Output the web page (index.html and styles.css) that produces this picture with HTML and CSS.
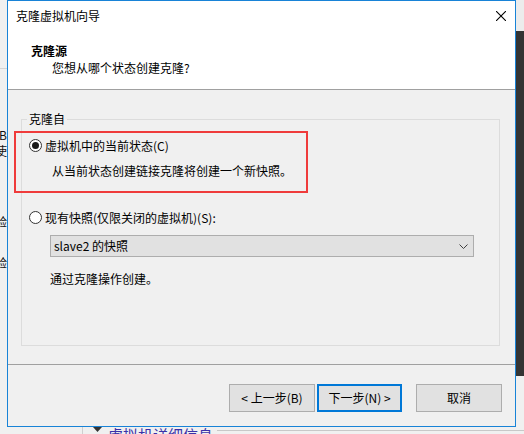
FILE: index.html
```html
<!DOCTYPE html>
<html lang="zh-CN">
<head>
<meta charset="utf-8">
<title>克隆虚拟机向导</title>
<link rel="stylesheet" href="styles.css">
</head>
<body>
<div class="screen">
  <div class="top">
    <div class="bg-left">
      <div class="bl-top"></div>
      <div class="bl-char bl-b">B</div>
      <div class="bl-char">使</div>
      <div class="bl-char bl-v1">验</div>
      <div class="bl-char bl-v2">验</div>
    </div>

    <div class="dialog">
      <div class="header">
        <div class="titlebar">
          <span class="title">克隆虚拟机向导</span>
          <svg class="close" width="10" height="10" viewBox="0 0 10 10"><path d="M0 0L10 10M10 0L0 10" stroke="#000" stroke-width="1.1" fill="none"/></svg>
        </div>
        <div class="head-text">
          <div class="head-title">克隆源</div>
          <div class="head-sub">您想从哪个状态创建克隆?</div>
        </div>
      </div>

      <div class="body">
        <fieldset class="group">
          <legend>克隆自</legend>
          <div class="radio-row first">
            <span class="radio checked"><span class="dot"></span></span>
            <span>虚拟机中的当前状态(C)</span>
          </div>
          <div class="desc">从当前状态创建链接克隆将创建一个新快照。</div>
          <div class="radio-row second">
            <span class="radio"></span>
            <span>现有快照(仅限关闭的虚拟机)(S):</span>
          </div>
          <div class="select">
            <span>slave2 的快照</span>
            <svg width="9" height="5" viewBox="0 0 9 5"><polyline points="0.5,0.5 4.5,4.5 8.5,0.5" fill="none" stroke="#404040" stroke-width="1"/></svg>
          </div>
          <div class="note">通过克隆操作创建。</div>
        </fieldset>
      </div>

      <div class="footer">
        <div class="btn btn-back">&lt; 上一步(B)</div>
        <div class="btn btn-next">下一步(N) &gt;</div>
        <div class="btn">取消</div>
      </div>

      <div class="highlight"></div>
    </div>

    <div class="bg-right">
      <div class="br-light"></div>
      <div class="br-dark"></div>
    </div>
  </div>

  <div class="bg-bottom">
    <div class="bb-vline"></div>
    <svg class="bb-tri" width="9" height="5" viewBox="0 0 9 5"><polygon points="0,0 9,0 4.5,5" fill="#333"/></svg>
    <span class="bb-text">虚拟机详细信息</span>
    <div class="bb-line"></div>
  </div>
</div>
</body>
</html>
```

FILE: styles.css
```css
html, body {
  margin: 0;
  padding: 0;
}
body {
  width: 524px;
  height: 434px;
  overflow: hidden;
  background: #f0f0f0;
  font-family: "Noto Sans CJK SC", "Microsoft YaHei", sans-serif;
  font-size: 12px;
  color: #000;
}
.screen {
  display: flex;
  flex-direction: column;
  height: 434px;
}
.top {
  display: flex;
  height: 427px;
}

/* background window, left */
.bg-left {
  width: 7px;
  overflow: hidden;
  display: flex;
  flex-direction: column;
  background: #f0f0f0;
}
.bl-top {
  height: 68px;
  border-bottom: 1px solid #d4d4d4;
  flex: none;
}
.bl-char {
  display: flex;
  justify-content: flex-end;
  line-height: 16px;
  white-space: nowrap;
  font-size: 12px;
  color: #111;
}
.bl-b { margin-top: 58px; }
.bl-v1 { margin-top: 55px; }
.bl-v2 { margin-top: 25px; }

/* background window, right */
.bg-right {
  width: 8px;
  display: flex;
  flex-direction: column;
}
.br-light {
  height: 31px;
  background: #ececec;
}
.br-dark {
  height: 345px;
  background: #343434;
}

/* dialog */
.dialog {
  width: 509px;
  box-sizing: border-box;
  border: 1px solid #1883d7;
  background: #f0f0f0;
  display: flex;
  flex-direction: column;
  position: relative;
}
.header {
  background: #fff;
  height: 88px;
  border-bottom: 1px solid #a0a0a0;
  flex: none;
}
.titlebar {
  height: 30px;
  display: flex;
  align-items: center;
  justify-content: space-between;
  padding: 0 9px 0 8px;
}
.title {
  line-height: 18px;
}
.head-text {
  margin-top: 11px;
  padding-left: 23px;
  line-height: 17px;
}
.head-title {
  font-weight: bold;
}
.head-sub {
  padding-left: 21px;
}

.body {
  height: 274px;
  flex: none;
}
.group {
  margin: 20px 15px 0 13px;
  padding: 0;
  height: 236px;
  box-sizing: border-box;
  border: 1px solid #dcdcdc;
  min-width: 0;
}
.group legend {
  margin-left: 5px;
  padding: 0 2px;
  line-height: 18px;
}
.radio-row {
  display: flex;
  align-items: center;
  height: 18px;
  padding-left: 7px;
  gap: 3px;
}
.radio-row.first { margin-top: 8px; }
.radio-row.second { margin-top: 28px; }
.radio {
  width: 13px;
  height: 13px;
  box-sizing: border-box;
  border: 1px solid #333;
  border-radius: 50%;
  background: #fff;
  display: flex;
  align-items: center;
  justify-content: center;
  flex: none;
}
.dot {
  width: 7px;
  height: 7px;
  border-radius: 50%;
  background: #1a1a1a;
}
.desc {
  margin-top: 8px;
  padding-left: 30px;
  line-height: 18px;
}
.select {
  margin: 9px 0 0 28px;
  width: 424px;
  height: 22px;
  box-sizing: border-box;
  border: 1px solid #adadad;
  background: #e1e1e1;
  display: flex;
  align-items: center;
  justify-content: space-between;
  padding: 0 5px 0 3px;
  line-height: 20px;
}
.note {
  margin-top: 13px;
  padding-left: 28px;
  line-height: 18px;
}

.footer {
  flex: 1;
  border-top: 1px solid #a0a0a0;
  display: flex;
  justify-content: flex-end;
  align-items: flex-start;
  padding: 19px 13px 0 0;
}
.btn {
  width: 86px;
  height: 28px;
  box-sizing: border-box;
  border: 1px solid #adadad;
  background: #e1e1e1;
  display: flex;
  align-items: center;
  justify-content: center;
  line-height: 18px;
}
.btn-back {
  margin-right: 2px;
}
.btn-next {
  width: 85px;
  border: 2px solid #0078d7;
  margin-right: 14px;
}

.highlight {
  position: absolute;
  left: 6px;
  top: 130px;
  width: 294px;
  height: 62px;
  box-sizing: border-box;
  border: 2px solid #ef3b3b;
}

/* background window, bottom */
.bg-bottom {
  height: 7px;
  overflow: hidden;
  display: flex;
  align-items: flex-start;
  background: #f0f0f0;
}
.bb-vline {
  margin-left: 82px;
  width: 1px;
  height: 7px;
  background: #cfcfcf;
}
.bb-tri {
  margin-left: 10px;
  margin-top: 0;
  flex: none;
}
.bb-text {
  margin-left: 6px;
  margin-top: -1px;
  font-size: 15px;
  line-height: 17px;
  color: #3b30a8;
  white-space: nowrap;
}
.bb-line {
  flex: 1;
  margin: 3px 0 0 4px;
  height: 0;
  border-top: 1px solid #c8c8c8;
}
```
